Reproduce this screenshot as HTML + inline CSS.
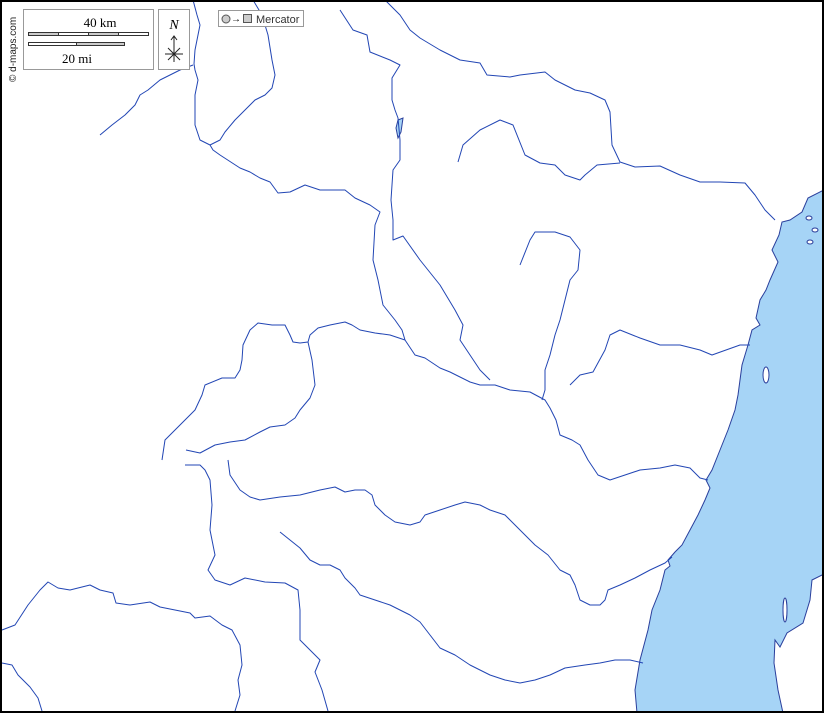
<!DOCTYPE html>
<html><head><meta charset="utf-8"><style>
html,body{margin:0;padding:0;background:#fff}
svg{display:block}
.serif{font-family:"Liberation Serif",serif}
.sans{font-family:"Liberation Sans",sans-serif}
</style></head><body>
<svg width="824" height="713" viewBox="0 0 824 713" xmlns="http://www.w3.org/2000/svg">
<rect x="0" y="0" width="824" height="713" fill="#fff"/>
<g fill="#a6d4f6" stroke="#2a3f9c" stroke-width="1">
<path d="M824,190 L808,198 L802,212 L790,220 L782,222 L779,235 L772,250 L778,262 L770,280 L766,290 L760,300 L756,318 L760,325 L752,330 L748,345 L745,355 L742,365 L740,380 L738,395 L735,410 L728,430 L720,450 L712,470 L706,480 L710,488 L705,500 L698,515 L690,530 L682,545 L675,552 L668,560 L670,566 L665,570 L660,590 L652,610 L648,630 L640,660 L635,690 L637,713 L783,713 L778,690 L774,663 L775,640 L780,647 L787,633 L803,623 L810,600 L812,580 L822,575 L824,575 Z"/>
<path d="M398,120 L403,118 L401,132 L398,138 L396,128 Z"/>
</g>
<g fill="#fff" stroke="#2a3f9c" stroke-width="1">
<ellipse cx="809" cy="218" rx="3" ry="2"/>
<ellipse cx="815" cy="230" rx="3" ry="2"/>
<ellipse cx="810" cy="242" rx="3" ry="2"/>
<ellipse cx="766" cy="375" rx="3" ry="8"/>
<ellipse cx="785" cy="610" rx="2" ry="12"/>
</g>
<g fill="none" stroke="#2246b4" stroke-width="1" stroke-linejoin="round">
<polyline points="193,0 197,15 200,25 195,50 194,64 195,70 198,80 195,95 195,110 195,125 200,140 210,145 213,150 220,155 240,168 250,172 260,178 270,182 278,193 290,192 305,185 320,190 345,190 355,198 370,205 380,212 375,225 373,260 378,280 383,305 395,320 402,330 405,340 415,355 425,358 440,368 450,372 460,377 470,382 480,385 495,385 510,390 530,392 545,400 550,408 556,420 560,435 572,440 580,445 588,460 598,475 610,480 625,475 640,470 660,468 675,465 690,468 700,478 708,480"/>
<polyline points="193,65 180,70 160,80 148,90 140,95 135,105 125,115 112,125 100,135"/>
<polyline points="253,0 262,15 268,35 272,60 275,75 272,88 265,95 255,100 245,110 235,120 225,132 220,140 210,145"/>
<polyline points="340,10 353,30 367,35 370,52 390,60 400,65 392,78 392,100 395,110 398,118 400,140 400,160 393,170 391,200 393,220 393,240 403,236 420,260 440,285 455,310 463,325 460,340 470,355 480,370 490,380"/>
<polyline points="385,0 400,15 410,30 420,38 440,50 460,60 480,63 487,75 510,77 520,75 545,72 555,80 575,90 590,93 605,100 610,112 612,145 620,162 635,167 660,166 680,175 700,182 720,182 745,183 755,195 765,210 775,220"/>
<polyline points="458,162 463,145 480,130 500,120 513,125 525,155 540,163 555,165 565,175 580,180 585,175 597,165 620,163"/>
<polyline points="520,265 530,240 535,232 555,232 570,237 580,250 578,270 570,280 565,300 560,320 555,335 550,355 545,370 545,390 542,400"/>
<polyline points="570,385 580,375 593,372 605,350 610,335 620,330 640,338 660,345 680,345 700,350 712,355 740,345 750,345"/>
<polyline points="162,460 165,440 180,425 195,410 202,395 205,385 222,378 235,378 240,370 242,360 243,345 250,330 258,323 272,325 285,325 290,335 293,342 300,343 308,342 310,335 318,328 330,325 345,322 352,325 360,330 375,333 390,335 405,340"/>
<polyline points="308,342 312,360 315,385 310,398 300,410 295,418 285,425 270,427 260,432 245,440 230,442 215,445 200,453 186,450"/>
<polyline points="185,465 200,465 205,470 210,480 212,505 210,530 215,555 208,570 215,580 230,585 245,578 265,582 285,583 298,590 300,610 300,640 310,650 320,660 315,672 322,690 328,711"/>
<polyline points="228,460 230,475 240,490 250,497 260,500 280,497 300,495 320,490 335,487 345,492 355,490 365,490 372,495 375,505 385,515 395,522 410,525 420,522 425,515 440,510 455,505 465,502 480,505 490,510 505,515 510,520 520,530 535,545 548,555 560,570 570,575 575,585 580,600 590,605 600,605 605,600 608,590 620,585 635,578 650,570 665,563 672,557"/>
<polyline points="280,532 290,540 300,548 310,560 320,565 330,565 340,570 345,578 355,588 360,595 375,600 390,605 400,610 410,615 420,622 430,635 440,648 455,655 470,665 480,670 490,675 505,680 520,683 535,680 550,675 565,668 585,665 600,663 615,660 630,660 643,663"/>
<polyline points="2,630 15,625 28,605 40,590 48,582 58,588 70,590 90,585 100,590 113,593 116,603 130,605 150,602 160,607 175,610 190,613 195,618 210,616 222,625 232,630 240,645 242,665 238,680 240,695 235,711"/>
<polyline points="2,663 12,665 18,675 30,687 38,698 42,711"/>
</g>
<rect x="23.5" y="9.5" width="130" height="60" fill="#fff" stroke="#999"/>
<text class="serif" x="100" y="27" font-size="13" text-anchor="middle">40 km</text>
<rect x="28.5" y="32.5" width="120" height="3" fill="#fff" stroke="#333" stroke-width="1"/>
<rect x="28.5" y="32.5" width="30" height="3" fill="#ccc" stroke="#333"/>
<rect x="88.5" y="32.5" width="30" height="3" fill="#ccc" stroke="#333"/>
<rect x="28.5" y="42.5" width="96" height="3" fill="#fff" stroke="#333"/>
<rect x="76.5" y="42.5" width="48" height="3" fill="#ccc" stroke="#333"/>
<text class="serif" x="77" y="63" font-size="13" text-anchor="middle">20 mi</text>
<rect x="158.5" y="9.5" width="31" height="60" fill="#fff" stroke="#999"/>
<text class="serif" x="174" y="29" font-size="14" font-style="italic" text-anchor="middle">N</text>
<g stroke="#222" stroke-width="1" fill="none">
<line x1="174" y1="36" x2="174" y2="62"/><polyline points="171,40 174,36 177,40"/>
<line x1="165" y1="54" x2="183" y2="54"/><line x1="168" y1="48" x2="180" y2="60"/><line x1="180" y1="48" x2="168" y2="60"/>
</g>
<rect x="218.5" y="10.5" width="85" height="16" fill="#fff" stroke="#999"/>
<circle cx="226" cy="19" r="4" fill="#ccc" stroke="#555"/>
<text class="sans" x="231" y="22" font-size="10">→</text>
<rect x="243.5" y="14.5" width="8" height="8" fill="#ccc" stroke="#555"/>
<text class="sans" x="256" y="23" font-size="11" fill="#333">Mercator</text>
<text class="sans" transform="translate(16,82) rotate(-90)" font-size="10" fill="#222">© d-maps.com</text>
<rect x="1" y="1" width="822" height="711" fill="none" stroke="#000" stroke-width="2"/>
</svg>
</body></html>
